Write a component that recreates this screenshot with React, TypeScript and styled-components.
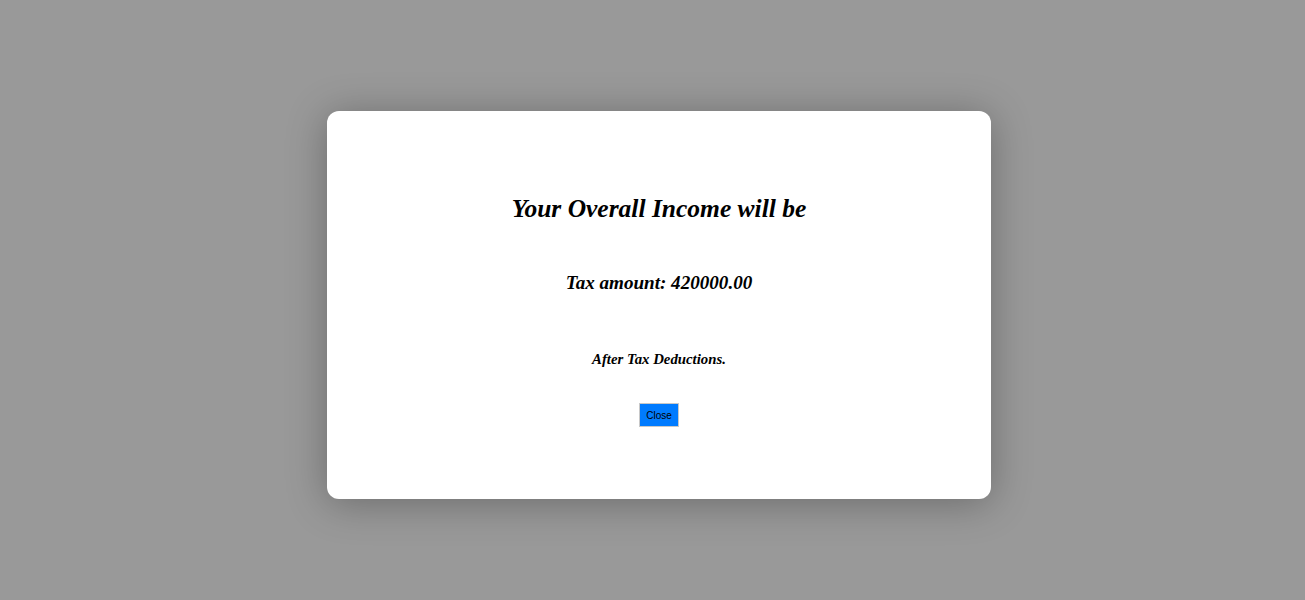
import React from "react";
import styled, { createGlobalStyle } from "styled-components";

const GlobalStyle = createGlobalStyle`
  html, body {
    margin: 0;
    padding: 0;
    background: #fff;
  }
`;

const Overlay = styled.div`
  width: 100%;
  height: 600px;
  background: rgba(0, 0, 0, 0.4);
  display: flex;
  align-items: center;
  justify-content: center;
  padding: 10px 0 0 13px;
  box-sizing: border-box;
`;

const ModalBox = styled.div`
  width: 664px;
  height: 388px;
  box-sizing: border-box;
  background: #fff;
  border-radius: 12px;
  box-shadow: 0 4px 40px rgba(0, 0, 0, 0.3);
  display: flex;
  flex-direction: column;
  align-items: center;
  padding-top: 83px;
  font-family: "Liberation Serif", "Times New Roman", serif;
  font-style: italic;
  font-weight: bold;
  color: #000;
`;

const Title = styled.h2`
  margin: 0;
  font-size: 25.5px;
  line-height: 30px;
`;

const Amount = styled.h3`
  margin: 48px 0 0;
  font-size: 19.1px;
  line-height: 22px;
`;

const Note = styled.h4`
  margin: 56px 0 0;
  font-size: 14.8px;
  line-height: 18px;
`;

const CloseButton = styled.button`
  margin-top: 35px;
  height: 24px;
  padding: 0 6px;
  border: 1px solid #c8c8c8;
  background: #007bff;
  color: #000;
  font-family: "Liberation Sans", Arial, sans-serif;
  font-size: 10px;
  font-style: normal;
  font-weight: normal;
  cursor: pointer;
`;

export default function App() {
  return (
    <>
      <GlobalStyle />
      <Overlay>
        <ModalBox>
          <Title>Your Overall Income will be</Title>
          <Amount>Tax amount: 420000.00</Amount>
          <Note>After Tax Deductions.</Note>
          <CloseButton>Close</CloseButton>
        </ModalBox>
      </Overlay>
    </>
  );
}
